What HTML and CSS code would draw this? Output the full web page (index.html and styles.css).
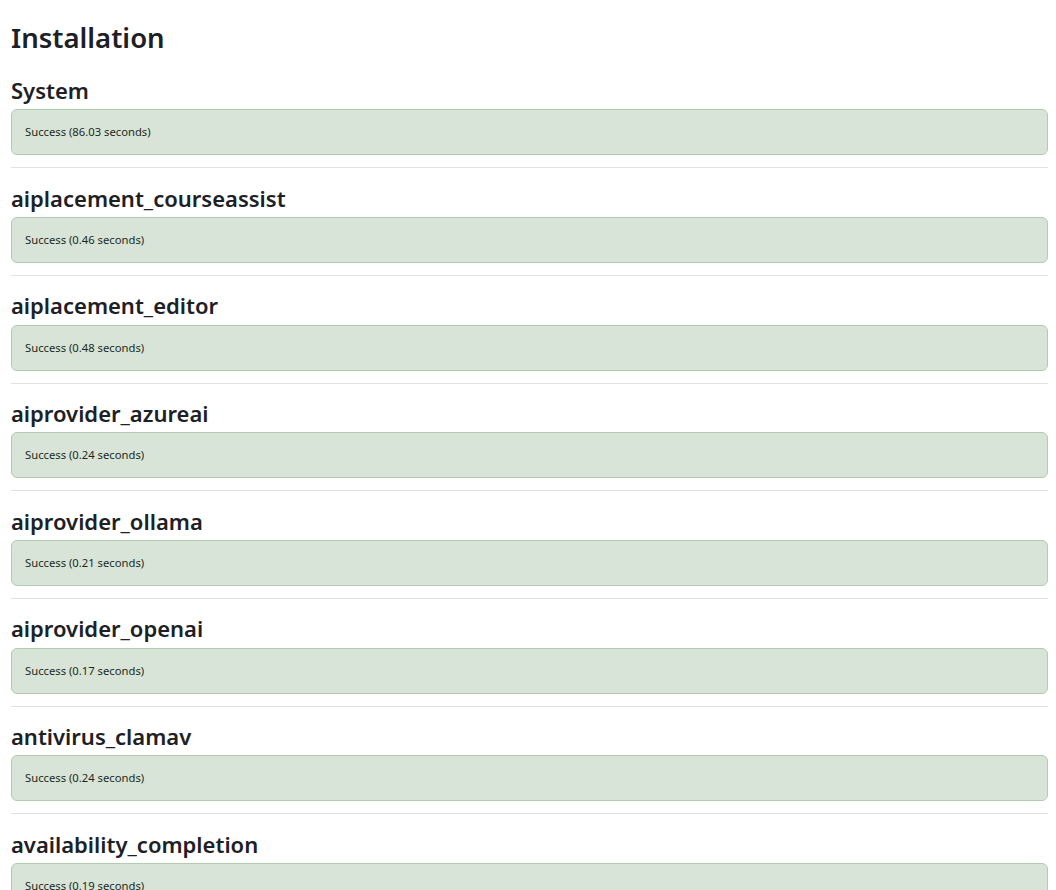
FILE: index.html
```html
<!DOCTYPE html>
<html lang="en">
<head>
<meta charset="utf-8">
<title>Installation</title>
<link rel="stylesheet" href="styles.css">
</head>
<body>
<main class="page">
  <h2 class="page-title">Installation</h2>
  <section class="plugin">
    <h3 class="plugin-name">System</h3>
    <div class="alert">Success (86.03 seconds)</div>
  </section>
  <hr class="sep">
  <section class="plugin">
    <h3 class="plugin-name">aiplacement_courseassist</h3>
    <div class="alert">Success (0.46 seconds)</div>
  </section>
  <hr class="sep">
  <section class="plugin">
    <h3 class="plugin-name">aiplacement_editor</h3>
    <div class="alert">Success (0.48 seconds)</div>
  </section>
  <hr class="sep">
  <section class="plugin">
    <h3 class="plugin-name">aiprovider_azureai</h3>
    <div class="alert">Success (0.24 seconds)</div>
  </section>
  <hr class="sep">
  <section class="plugin">
    <h3 class="plugin-name">aiprovider_ollama</h3>
    <div class="alert">Success (0.21 seconds)</div>
  </section>
  <hr class="sep">
  <section class="plugin">
    <h3 class="plugin-name">aiprovider_openai</h3>
    <div class="alert">Success (0.17 seconds)</div>
  </section>
  <hr class="sep">
  <section class="plugin">
    <h3 class="plugin-name">antivirus_clamav</h3>
    <div class="alert">Success (0.24 seconds)</div>
  </section>
  <hr class="sep">
  <section class="plugin">
    <h3 class="plugin-name">availability_completion</h3>
    <div class="alert">Success (0.19 seconds)</div>
  </section>
  <hr class="sep">
</main>
</body>
</html>
```
FILE: styles.css
```css
html, body {
  margin: 0;
  padding: 0;
  background: #ffffff;
}
body {
  font-family: "Noto Sans", "Open Sans", sans-serif;
  color: #1d2125;
}
.page {
  padding: 21px 8px 0 11px;
}
.page-title {
  font-size: 27.5px;
  font-weight: 600;
  line-height: 33px;
  margin: 0 0 23px 0;
}
.plugin-name {
  font-size: 22px;
  font-weight: 600;
  line-height: 26.4px;
  margin: 0 0 6px 0;
}
.alert {
  background: #d7e4d7;
  border: 1px solid #b1cdae;
  border-radius: 6px;
  color: #1c2a1c;
  font-size: 11.25px;
  line-height: 16px;
  padding: 14px 13px;
}
.sep {
  border: 0;
  border-top: 1px solid #dee2e6;
  margin: 12px 0 16.27px 0;
}
```
